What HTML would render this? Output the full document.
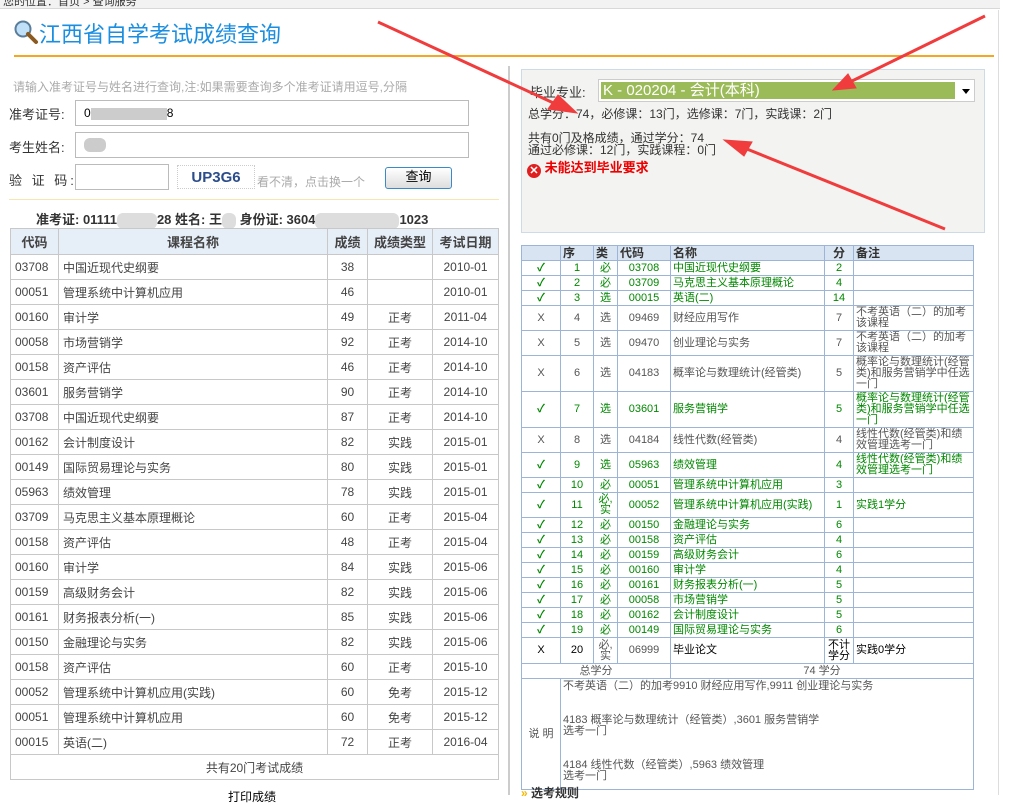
<!DOCTYPE html>
<html><head><meta charset="utf-8"><style>
*{margin:0;padding:0;box-sizing:border-box}
body{width:1016px;height:795px;overflow:hidden;background:#fff;font-family:"Liberation Sans","Noto Sans CJK SC",sans-serif;font-size:12px;color:#333;position:relative}
.abs{position:absolute}
table{border-collapse:collapse;position:absolute;table-layout:fixed}
#lt td{border:1px solid #c8c8c8;height:25px;font-size:12px;color:#444;padding:0 4px}
#lt th{border:1px solid #c8c8c8;height:26px;background:#e6eef8;font-size:13px;color:#444}
#rt td,#rt th{border:1px solid #9bb4d8;font-size:11px;line-height:11px;padding:0 2px;text-align:center;color:#555;overflow:hidden}
#rt th{background:#d8e4f2;text-align:left;font-size:12px;color:#333}
#rt tr.g td{color:#080}
#rt td.l{text-align:left}
.ck{color:#1a9a2a;font-size:15px;font-weight:bold}
input{border:1px solid #bbb}
.blur{display:inline-block;background:#ddd;border-radius:6px;vertical-align:middle;height:16px}
</style></head><body>
<div class="abs" style="left:0;top:0;width:1000px;height:9px;background:#f2f2f2;border-bottom:1px solid #d8d8d8;font-size:11px;line-height:4px;overflow:hidden;color:#333">&nbsp;您的位置：首页 &gt; 查询服务</div>
<div class="abs" style="left:998px;top:10px;width:1px;height:785px;background:#ddd"></div>
<div class="abs" style="left:13px;top:19px;font-size:22px;color:#1a8ee0;line-height:28px">
<svg width="26" height="26" viewBox="0 0 26 26" style="vertical-align:-3px"><circle cx="10" cy="10" r="7.5" fill="#bfe0f8" stroke="#5a7d9a" stroke-width="2"/><line x1="15" y1="15" x2="23" y2="23" stroke="#8a5a20" stroke-width="4" stroke-linecap="round"/></svg>江西省自学考试成绩查询</div>
<div class="abs" style="left:14px;top:55px;width:980px;height:2px;background:#f5a623"></div>
<div class="abs" style="left:13px;top:78px;color:#aaa;font-size:12px">请输入准考证号与姓名进行查询,注:如果需要查询多个准考证请用逗号,分隔</div>
<div class="abs" style="left:9px;top:104px;font-size:13px">准考证号:</div>
<input class="abs" style="left:75px;top:100px;width:394px;height:26px">
<div class="abs" style="left:84px;top:106px;font-size:12px;color:#000">0<span style="display:inline-block;width:76px;height:12px;background:#ccc;vertical-align:middle"></span>8</div>
<div class="abs" style="left:9px;top:137px;font-size:13px">考生姓名:</div>
<input class="abs" style="left:75px;top:132px;width:394px;height:26px">
<div class="abs" style="left:84px;top:138px;width:22px;height:14px;background:#ccc;border-radius:6px"></div>
<div class="abs" style="left:9px;top:170px;font-size:13px;letter-spacing:3px">验 证 码:</div>
<input class="abs" style="left:75px;top:164px;width:94px;height:26px">
<div class="abs" style="left:177px;top:165px;width:78px;height:24px;border:1px dotted #ccc;color:#2b4d8a;font-weight:bold;font-size:15px;text-align:center;line-height:24px">UP3G6</div>
<div class="abs" style="left:257px;top:173px;color:#aaa;font-size:12px">看不清，点击换一个</div>
<div class="abs" style="left:385px;top:167px;width:67px;height:22px;border:1px solid #3a8ac8;border-radius:3px;background:linear-gradient(#fff,#ddd);text-align:center;line-height:18px;font-size:13px;color:#000">查询</div>
<div class="abs" style="left:9px;top:199px;width:490px;height:1px;background:#f8e6b0"></div>
<div class="abs" style="left:36px;top:209px;font-weight:bold;font-size:13px;color:#333;white-space:nowrap">准考证: 01111<span class="blur" style="width:40px"></span>28 姓名: 王<span class="blur" style="width:14px"></span> 身份证: 3604<span class="blur" style="width:84px"></span>1023</div>
<table id="lt" style="left:10px;top:228px;width:488px">
<colgroup><col style="width:48px"><col style="width:269px"><col style="width:40px"><col style="width:65px"><col style="width:66px"></colgroup>
<tr><th>代码</th><th>课程名称</th><th>成绩</th><th>成绩类型</th><th>考试日期</th></tr>
<tr><td>03708</td><td>中国近现代史纲要</td><td align=center>38</td><td align=center></td><td align=center>2010-01</td></tr>
<tr><td>00051</td><td>管理系统中计算机应用</td><td align=center>46</td><td align=center></td><td align=center>2010-01</td></tr>
<tr><td>00160</td><td>审计学</td><td align=center>49</td><td align=center>正考</td><td align=center>2011-04</td></tr>
<tr><td>00058</td><td>市场营销学</td><td align=center>92</td><td align=center>正考</td><td align=center>2014-10</td></tr>
<tr><td>00158</td><td>资产评估</td><td align=center>46</td><td align=center>正考</td><td align=center>2014-10</td></tr>
<tr><td>03601</td><td>服务营销学</td><td align=center>90</td><td align=center>正考</td><td align=center>2014-10</td></tr>
<tr><td>03708</td><td>中国近现代史纲要</td><td align=center>87</td><td align=center>正考</td><td align=center>2014-10</td></tr>
<tr><td>00162</td><td>会计制度设计</td><td align=center>82</td><td align=center>实践</td><td align=center>2015-01</td></tr>
<tr><td>00149</td><td>国际贸易理论与实务</td><td align=center>80</td><td align=center>实践</td><td align=center>2015-01</td></tr>
<tr><td>05963</td><td>绩效管理</td><td align=center>78</td><td align=center>实践</td><td align=center>2015-01</td></tr>
<tr><td>03709</td><td>马克思主义基本原理概论</td><td align=center>60</td><td align=center>正考</td><td align=center>2015-04</td></tr>
<tr><td>00158</td><td>资产评估</td><td align=center>48</td><td align=center>正考</td><td align=center>2015-04</td></tr>
<tr><td>00160</td><td>审计学</td><td align=center>84</td><td align=center>实践</td><td align=center>2015-06</td></tr>
<tr><td>00159</td><td>高级财务会计</td><td align=center>82</td><td align=center>实践</td><td align=center>2015-06</td></tr>
<tr><td>00161</td><td>财务报表分析(一)</td><td align=center>85</td><td align=center>实践</td><td align=center>2015-06</td></tr>
<tr><td>00150</td><td>金融理论与实务</td><td align=center>82</td><td align=center>实践</td><td align=center>2015-06</td></tr>
<tr><td>00158</td><td>资产评估</td><td align=center>60</td><td align=center>正考</td><td align=center>2015-10</td></tr>
<tr><td>00052</td><td>管理系统中计算机应用(实践)</td><td align=center>60</td><td align=center>免考</td><td align=center>2015-12</td></tr>
<tr><td>00051</td><td>管理系统中计算机应用</td><td align=center>60</td><td align=center>免考</td><td align=center>2015-12</td></tr>
<tr><td>00015</td><td>英语(二)</td><td align=center>72</td><td align=center>正考</td><td align=center>2016-04</td></tr>
<tr><td colspan=5 align=center>共有20门考试成绩</td></tr>
</table>
<div class="abs" style="left:228px;top:788px;font-size:12px;color:#000">打印成绩</div>
<div class="abs" style="left:508px;top:66px;width:2px;height:729px;background:#ccc"></div>
<div class="abs" style="left:521px;top:69px;width:464px;height:164px;background:#f3f3f1;border:1px solid #cddbe8"></div>
<div class="abs" style="left:530px;top:82px;font-size:13px">毕业专业:</div>
<div class="abs" style="left:598px;top:79px;width:377px;height:23px;border:1px solid #ccc;background:#fff"><div style="margin:2px;width:354px;height:17px;background:#9bbb59;color:#fff;font-size:15px;line-height:17px;padding-left:2px">K - 020204 - 会计(本科)</div><div style="position:absolute;right:4px;top:9px;border:4px solid transparent;border-top:5px solid #000"></div></div>
<div class="abs" style="left:528px;top:105px;font-size:12px;color:#333">总学分：74，必修课：13门，选修课：7门，实践课：2门</div>
<div class="abs" style="left:528px;top:132px;font-size:12px;color:#333;line-height:12px">共有0门及格成绩，通过学分：74<br>通过必修课：12门，实践课程：0门</div>
<div class="abs" style="left:527px;top:157px;font-size:13px;color:#e00;font-weight:bold"><span style="display:inline-block;width:14px;height:14px;border-radius:7px;background:#e02020;color:#fff;font-size:11px;line-height:14px;text-align:center;vertical-align:-2px">✕</span> 未能达到毕业要求</div>
<table id="rt" style="left:521px;top:245px;width:452px">
<colgroup><col style="width:39px"><col style="width:33px"><col style="width:24px"><col style="width:53px"><col style="width:154px"><col style="width:29px"><col style="width:120px"></colgroup>
<tr style="height:15px"><th></th><th>序</th><th>类</th><th>代码</th><th>名称</th><th style="text-align:center">分</th><th>备注</th></tr>
<tr class="g" style="height:15px"><td class="ck">✓</td><td>1</td><td>必</td><td>03708</td><td class="l">中国近现代史纲要</td><td>2</td><td></td></tr>
<tr class="g" style="height:15px"><td class="ck">✓</td><td>2</td><td>必</td><td>03709</td><td class="l">马克思主义基本原理概论</td><td>4</td><td></td></tr>
<tr class="g" style="height:15px"><td class="ck">✓</td><td>3</td><td>选</td><td>00015</td><td class="l">英语(二)</td><td>14</td><td></td></tr>
<tr style="height:25px"><td>X</td><td>4</td><td>选</td><td>09469</td><td class="l">财经应用写作</td><td>7</td><td class="l">不考英语（二）的加考该课程</td></tr>
<tr style="height:25px"><td>X</td><td>5</td><td>选</td><td>09470</td><td class="l">创业理论与实务</td><td>7</td><td class="l">不考英语（二）的加考该课程</td></tr>
<tr style="height:36px"><td>X</td><td>6</td><td>选</td><td>04183</td><td class="l">概率论与数理统计(经管类)</td><td>5</td><td class="l">概率论与数理统计(经管类)和服务营销学中任选一门</td></tr>
<tr class="g" style="height:36px"><td class="ck">✓</td><td>7</td><td>选</td><td>03601</td><td class="l">服务营销学</td><td>5</td><td class="l">概率论与数理统计(经管类)和服务营销学中任选一门</td></tr>
<tr style="height:25px"><td>X</td><td>8</td><td>选</td><td>04184</td><td class="l">线性代数(经管类)</td><td>4</td><td class="l">线性代数(经管类)和绩效管理选考一门</td></tr>
<tr class="g" style="height:25px"><td class="ck">✓</td><td>9</td><td>选</td><td>05963</td><td class="l">绩效管理</td><td>4</td><td class="l">线性代数(经管类)和绩效管理选考一门</td></tr>
<tr class="g" style="height:15px"><td class="ck">✓</td><td>10</td><td>必</td><td>00051</td><td class="l">管理系统中计算机应用</td><td>3</td><td></td></tr>
<tr class="g" style="height:25px"><td class="ck">✓</td><td>11</td><td>必,实</td><td>00052</td><td class="l">管理系统中计算机应用(实践)</td><td>1</td><td class="l">实践1学分</td></tr>
<tr class="g" style="height:15px"><td class="ck">✓</td><td>12</td><td>必</td><td>00150</td><td class="l">金融理论与实务</td><td>6</td><td></td></tr>
<tr class="g" style="height:15px"><td class="ck">✓</td><td>13</td><td>必</td><td>00158</td><td class="l">资产评估</td><td>4</td><td></td></tr>
<tr class="g" style="height:15px"><td class="ck">✓</td><td>14</td><td>必</td><td>00159</td><td class="l">高级财务会计</td><td>6</td><td></td></tr>
<tr class="g" style="height:15px"><td class="ck">✓</td><td>15</td><td>必</td><td>00160</td><td class="l">审计学</td><td>4</td><td></td></tr>
<tr class="g" style="height:15px"><td class="ck">✓</td><td>16</td><td>必</td><td>00161</td><td class="l">财务报表分析(一)</td><td>5</td><td></td></tr>
<tr class="g" style="height:15px"><td class="ck">✓</td><td>17</td><td>必</td><td>00058</td><td class="l">市场营销学</td><td>5</td><td></td></tr>
<tr class="g" style="height:15px"><td class="ck">✓</td><td>18</td><td>必</td><td>00162</td><td class="l">会计制度设计</td><td>5</td><td></td></tr>
<tr class="g" style="height:15px"><td class="ck">✓</td><td>19</td><td>必</td><td>00149</td><td class="l">国际贸易理论与实务</td><td>6</td><td></td></tr>
<tr style="height:26px"><td style="color:#000">X</td><td style="color:#000">20</td><td>必,实</td><td>06999</td><td class="l" style="color:#000">毕业论文</td><td style="color:#000">不计学分</td><td class="l" style="color:#000">实践0学分</td></tr>
<tr style="height:15px"><td colspan=4>总学分</td><td colspan=3>74 学分</td></tr>
<tr style="height:111px"><td>说 明</td><td colspan=6 class="l" style="vertical-align:top;padding:0"><div style="height:109px;overflow:hidden;line-height:11.3px;padding:2px 2px 0;font-size:11px">不考英语（二）的加考9910 财经应用写作,9911 创业理论与实务<br><br><br>4183 概率论与数理统计（经管类）,3601 服务营销学<br>选考一门<br><br><br>4184 线性代数（经管类）,5963 绩效管理<br>选考一门</div></td></tr>
</table>
<div class="abs" style="left:521px;top:789px;font-size:12px;font-weight:bold;color:#333;line-height:8px"><span style="color:#f5b800">»</span> 选考规则</div>
<svg class="abs" style="left:0;top:0" width="1016" height="795">
<g stroke="#f03c3c" fill="#f03c3c">
<line x1="378" y1="22" x2="560" y2="106" stroke-width="3"/>
<polygon points="577,113 548,109 558,95"/>
<line x1="985" y1="16" x2="850" y2="82" stroke-width="3"/>
<polygon points="833,90 848,74 856,88"/>
<line x1="945" y1="229" x2="742" y2="147" stroke-width="3"/>
<polygon points="724,140 752,142 744,156"/>
</g></svg>
</body></html>
